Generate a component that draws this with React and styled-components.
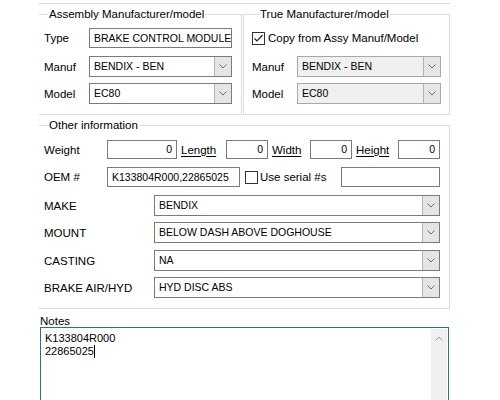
import styled, { createGlobalStyle } from "styled-components";

const Global = createGlobalStyle`
  html, body { margin: 0; padding: 0; background: #ffffff; }
  body {
    font-family: "Liberation Sans", Arial, sans-serif;
    font-size: 11.5px;
    color: #000;
  }
`;

const Page = styled.div`
  width: 500px;
  height: 400px;
  overflow: hidden;
  padding: 3px 0 0 39px;
  box-sizing: border-box;
`;

const TopRule = styled.div`
  width: 411px;
  height: 1px;
  background: #dcdcdc;
`;

const Groups = styled.div`
  display: flex;
  gap: 1px;
  margin-top: 3px;
`;

const Group = styled.fieldset`
  margin: ${({ $mt }) => $mt || 0}px 0 0 0;
  min-width: 0;
  box-sizing: border-box;
  width: ${({ $w }) => $w}px;
  border: 1px solid #dcdcdc;
  border-left: ${({ $noLeft }) => ($noLeft ? "none" : "1px solid #dcdcdc")};
  padding: ${({ $pt }) => $pt}px ${({ $pr }) => $pr}px ${({ $pb }) => $pb}px ${({ $pl }) => $pl}px;
  display: flex;
  flex-direction: column;
`;

const Legend = styled.legend`
  padding: 0 1px;
  margin-left: ${({ $ml }) => $ml}px;
  line-height: 14px;
  font-size: 11.5px;
  color: #000;
`;

const Row = styled.div`
  display: flex;
  align-items: center;
  height: ${({ $h }) => $h || 21}px;
  margin-top: ${({ $mt }) => $mt || 0}px;
`;

const Label = styled.span`
  width: ${({ $w }) => $w}px;
  flex-shrink: 0;
  white-space: nowrap;
`;

const LinkLabel = styled.span`
  width: ${({ $w }) => $w}px;
  flex-shrink: 0;
  padding-left: 4px;
  box-sizing: border-box;
  text-decoration: underline;
  text-underline-offset: 2px;
`;

const Input = styled.div`
  box-sizing: border-box;
  width: ${({ $w }) => $w}px;
  height: ${({ $h }) => $h || 20}px;
  flex-shrink: 0;
  border: 1px solid #7a7a7a;
  background: #fff;
  font-size: 10.5px;
  line-height: ${({ $h }) => ($h || 20) - 2}px;
  padding: 0 4px;
  white-space: nowrap;
  overflow: hidden;
  text-align: ${({ $right }) => ($right ? "right" : "left")};
`;

const Combo = styled.div`
  box-sizing: border-box;
  width: ${({ $w }) => $w}px;
  height: 21px;
  flex-shrink: 0;
  display: flex;
  border: 1px solid ${({ $disabled }) => ($disabled ? "#a8a8a8" : "#7a7a7a")};
  background: ${({ $disabled }) => ($disabled ? "#f0f0f0" : "#fff")};
`;

const ComboText = styled.span`
  flex: 1;
  font-size: 10.5px;
  line-height: 19px;
  padding-left: 4px;
  white-space: nowrap;
  overflow: hidden;
`;

const DropButton = styled.span`
  width: 16px;
  flex-shrink: 0;
  background: #e5e5e5;
  border-left: 1px solid #b4b4b4;
  display: flex;
  align-items: center;
  justify-content: center;
`;

const Check = styled.span`
  box-sizing: border-box;
  width: 13px;
  height: 13px;
  flex-shrink: 0;
  border: 1px solid #333;
  background: #fff;
  display: flex;
  align-items: center;
  justify-content: center;
  margin-right: ${({ $mr }) => $mr}px;
  margin-left: ${({ $ml }) => $ml || 0}px;
`;

const CheckText = styled.span`
  white-space: nowrap;
  width: ${({ $w }) => ($w ? `${$w}px` : "auto")};
  flex-shrink: 0;
`;

const Notes = styled.div`
  margin-top: 6px;
  margin-left: 1px;
  display: flex;
  flex-direction: column;
`;

const NotesLabel = styled.span`
  line-height: 12px;
  height: 12px;
`;

const NotesBox = styled.div`
  box-sizing: border-box;
  width: 409px;
  height: 90px;
  border: 1px solid #2f6e92;
  display: flex;
`;

const NotesText = styled.div`
  flex: 1;
  padding: 4px 4px;
  font-size: 11px;
  line-height: 13px;
`;

const Caret = styled.span`
  display: inline-block;
  width: 1px;
  height: 13px;
  background: #000;
  vertical-align: top;
`;

const ScrollBar = styled.div`
  width: 16px;
  margin: 1px 1px 0 0;
  background: #f0f0f0;
  display: flex;
  justify-content: center;
  padding-top: 7px;
  box-sizing: border-box;
`;

const Chevron = ({ up }) => (
  <svg width="8" height="5" viewBox="0 0 8 5">
    <path
      d={up ? "M0.5 4.5 L4 1 L7.5 4.5" : "M0.5 0.5 L4 4 L7.5 0.5"}
      fill="none"
      stroke={up ? "#a0a0a0" : "#6e6e6e"}
      strokeWidth="1"
    />
  </svg>
);

const CheckMark = () => (
  <svg width="11" height="11" viewBox="0 0 11 11">
    <path d="M1.5 5.5 L4 8 L9.5 2" fill="none" stroke="#222" strokeWidth="1.2" />
  </svg>
);

const Dropdown = ({ w, value, disabled }) => (
  <Combo $w={w} $disabled={disabled}>
    <ComboText>{value}</ComboText>
    <DropButton>
      <Chevron />
    </DropButton>
  </Combo>
);

const extra = [
  ["MAKE", "BENDIX", 8],
  ["MOUNT", "BELOW DASH ABOVE DOGHOUSE", 6],
  ["CASTING", "NA", 7],
  ["BRAKE AIR/HYD", "HYD DISC ABS", 6],
];

export default function App() {
  return (
    <Page>
      <Global />
      <TopRule />
      <Groups>
        <Group $w={203} $noLeft $pt={7} $pr={9} $pb={10} $pl={5}>
          <Legend $ml={4}>Assembly Manufacturer/model</Legend>
          <Row $h={20}>
            <Label $w={45}>Type</Label>
            <Input $w={143}>BRAKE CONTROL MODULE (</Input>
          </Row>
          <Row $mt={8}>
            <Label $w={45}>Manuf</Label>
            <Dropdown w={143} value="BENDIX - BEN" />
          </Row>
          <Row $mt={6}>
            <Label $w={45}>Model</Label>
            <Dropdown w={143} value="EC80" />
          </Row>
        </Group>
        <Group $w={207} $pt={7} $pr={7} $pb={10} $pl={8}>
          <Legend $ml={7}>True Manufacturer/model</Legend>
          <Row $h={20}>
            <Check $mr={3}>
              <CheckMark />
            </Check>
            <CheckText>Copy from Assy Manuf/Model</CheckText>
          </Row>
          <Row $mt={8}>
            <Label $w={45}>Manuf</Label>
            <Dropdown w={144} value="BENDIX - BEN" disabled />
          </Row>
          <Row $mt={6}>
            <Label $w={45}>Model</Label>
            <Dropdown w={144} value="EC80" disabled />
          </Row>
        </Group>
      </Groups>
      <Group $w={411} $mt={3} $noLeft $pt={8} $pr={8} $pb={10} $pl={5}>
        <Legend $ml={4}>Other information</Legend>
        <Row $h={19}>
          <Label $w={63}>Weight</Label>
          <Input $w={70} $h={19} $right>0</Input>
          <LinkLabel $w={49}>Length</LinkLabel>
          <Input $w={42} $h={19} $right>0</Input>
          <LinkLabel $w={42}>Width</LinkLabel>
          <Input $w={42} $h={19} $right>0</Input>
          <LinkLabel $w={46}>Height</LinkLabel>
          <Input $w={42} $h={19} $right>0</Input>
        </Row>
        <Row $h={20} $mt={8}>
          <Label $w={63}>OEM #</Label>
          <Input $w={133}>K133804R000,22865025</Input>
          <Check $ml={5} $mr={2} />
          <CheckText $w={81}>Use serial #s</CheckText>
          <Input $w={99} />
        </Row>
        {extra.map(([label, value, mt]) => (
          <Row key={label} $mt={mt}>
            <Label $w={110}>{label}</Label>
            <Dropdown w={286} value={value} />
          </Row>
        ))}
      </Group>
      <Notes>
        <NotesLabel>Notes</NotesLabel>
        <NotesBox>
          <NotesText>
            K133804R000
            <br />
            22865025
            <Caret />
          </NotesText>
          <ScrollBar>
            <Chevron up />
          </ScrollBar>
        </NotesBox>
      </Notes>
    </Page>
  );
}
